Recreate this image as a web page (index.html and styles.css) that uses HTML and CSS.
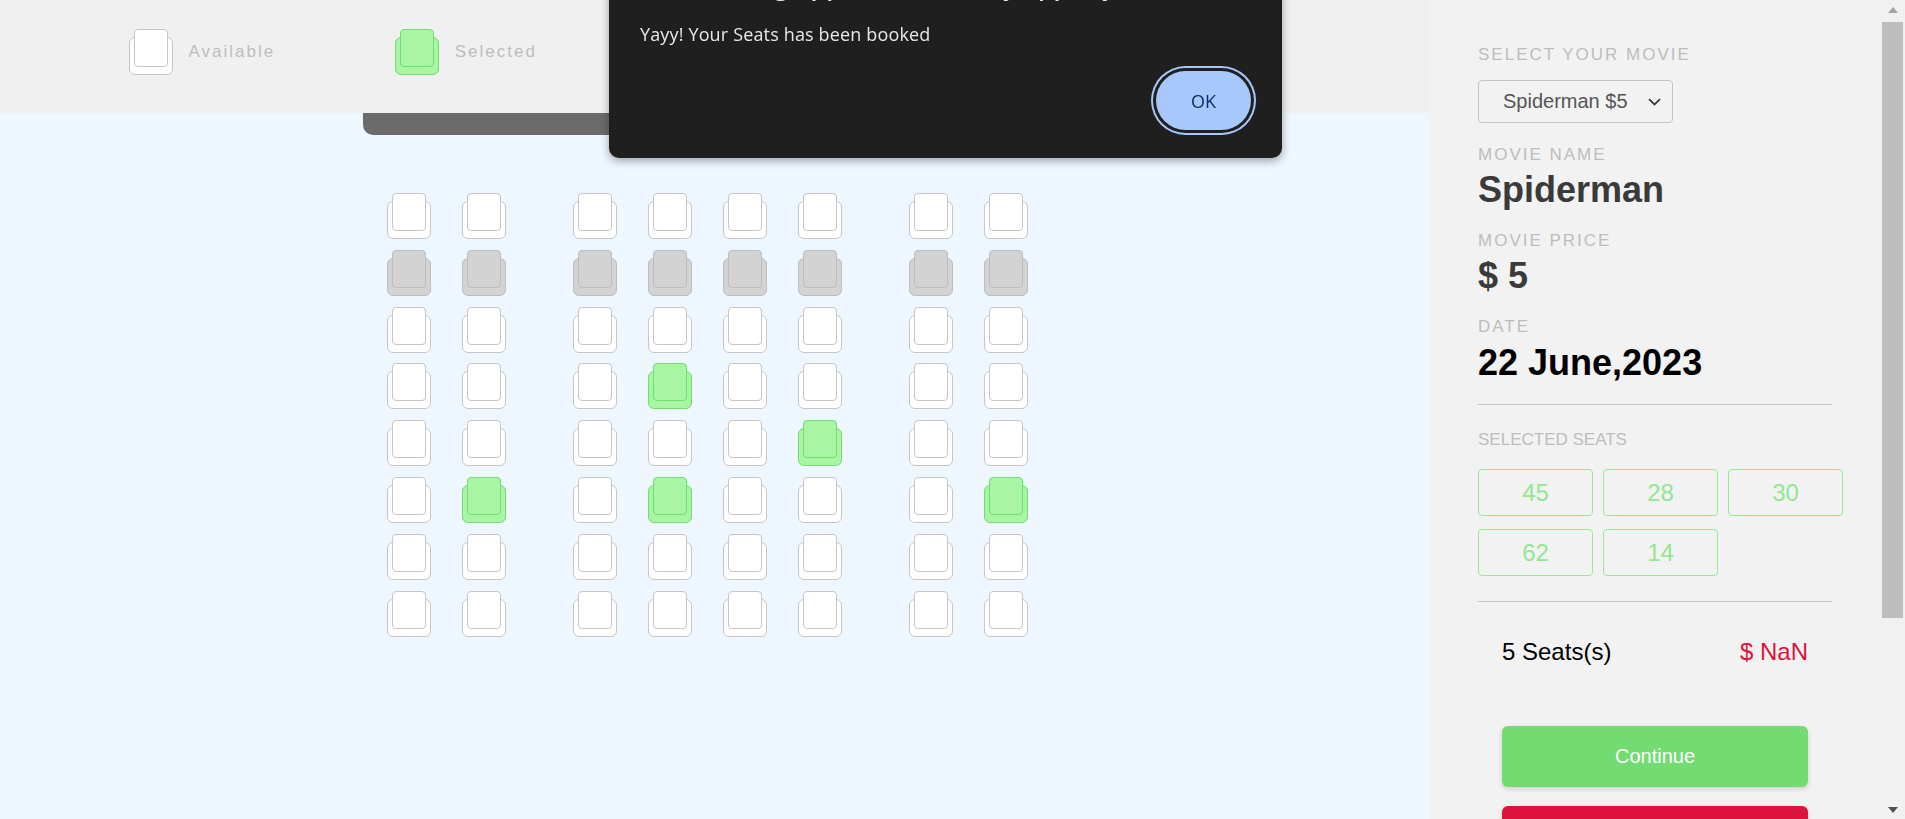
FILE: index.html
```html
<!DOCTYPE html>
<html lang="en">
<head>
<meta charset="utf-8">
<title>Movie Seat Booking</title>
<link rel="stylesheet" href="styles.css">
</head>
<body>
<div class="window">
  <div class="app">
    <main class="hall">
      <header class="legend">
        <div class="legend-item"><span class="seat"></span><span class="legend-text">Available</span></div>
        <div class="legend-item"><span class="seat selected"></span><span class="legend-text">Selected</span></div>
        <div class="legend-item"><span class="seat occupied"></span><span class="legend-text">Occupied</span></div>
      </header>
      <section class="theatre-wrap">
        <div class="theatre">
          <div class="screen"></div>
          <div class="seats">
            <div class="row"><span class="seat"></span><span class="seat"></span><span class="seat"></span><span class="seat"></span><span class="seat"></span><span class="seat"></span><span class="seat"></span><span class="seat"></span></div>
            <div class="row"><span class="seat occupied"></span><span class="seat occupied"></span><span class="seat occupied"></span><span class="seat occupied"></span><span class="seat occupied"></span><span class="seat occupied"></span><span class="seat occupied"></span><span class="seat occupied"></span></div>
            <div class="row"><span class="seat"></span><span class="seat"></span><span class="seat"></span><span class="seat"></span><span class="seat"></span><span class="seat"></span><span class="seat"></span><span class="seat"></span></div>
            <div class="row"><span class="seat"></span><span class="seat"></span><span class="seat"></span><span class="seat selected"></span><span class="seat"></span><span class="seat"></span><span class="seat"></span><span class="seat"></span></div>
            <div class="row"><span class="seat"></span><span class="seat"></span><span class="seat"></span><span class="seat"></span><span class="seat"></span><span class="seat selected"></span><span class="seat"></span><span class="seat"></span></div>
            <div class="row"><span class="seat"></span><span class="seat selected"></span><span class="seat"></span><span class="seat selected"></span><span class="seat"></span><span class="seat"></span><span class="seat"></span><span class="seat selected"></span></div>
            <div class="row"><span class="seat"></span><span class="seat"></span><span class="seat"></span><span class="seat"></span><span class="seat"></span><span class="seat"></span><span class="seat"></span><span class="seat"></span></div>
            <div class="row"><span class="seat"></span><span class="seat"></span><span class="seat"></span><span class="seat"></span><span class="seat"></span><span class="seat"></span><span class="seat"></span><span class="seat"></span></div>
          </div>
        </div>
      </section>
    </main>
    <aside class="sidebar">
      <p class="label first">Select your movie</p>
      <div class="select">
        <span>Spiderman $5</span>
        <svg class="chevron" width="13" height="8" viewBox="0 0 13 8"><path d="M1 1.2 L6.5 6.5 L12 1.2" fill="none" stroke="#3a3a3a" stroke-width="1.8"/></svg>
      </div>
      <p class="label">Movie Name</p>
      <h2 class="value">Spiderman</h2>
      <p class="label">Movie Price</p>
      <h2 class="value">$ 5</h2>
      <p class="label">Date</p>
      <h2 class="value date">22 June,2023</h2>
      <hr class="divider">
      <p class="label plain">Selected Seats</p>
      <div class="chips">
        <span class="chip">45</span><span class="chip">28</span><span class="chip">30</span>
        <span class="chip">62</span><span class="chip">14</span>
      </div>
      <hr class="divider">
      <div class="summary"><span>5 Seats(s)</span><span class="total">$ NaN</span></div>
      <button class="btn continue">Continue</button>
      <button class="btn cancel">Cancel</button>
    </aside>
  </div>
  <div class="scrollbar">
    <span class="sb-arrow up"></span>
    <span class="sb-thumb"></span>
    <span class="sb-arrow down"></span>
  </div>
</div>

<div class="dialog" role="alertdialog">
  <div class="dialog-title">seatbooking-app-adarsh.netlify.app says</div>
  <div class="dialog-msg">Yayy! Your Seats has been booked</div>
  <div class="dialog-actions"><button class="ok">OK</button></div>
</div>
</body>
</html>
```
FILE: styles.css
```css
* { box-sizing: border-box; }
html, body { margin: 0; padding: 0; }
body {
  font-family: "Liberation Sans", Arial, sans-serif;
  overflow: hidden;
  height: 819px;
}
.window {
  display: flex;
  height: 819px;
  overflow: hidden;
}
.app {
  flex: 1;
  display: flex;
  overflow: hidden;
}
/* ---------- left hall ---------- */
.hall {
  width: 1430px;
  flex: none;
  display: flex;
  flex-direction: column;
}
.legend {
  height: 113px;
  flex: none;
  background: #f0f0f0;
  display: flex;
  align-items: flex-start;
  gap: 120px;
  padding: 29px 0 0 129px;
}
.legend-item {
  display: flex;
  align-items: center;
  gap: 15.5px;
}
.legend-text {
  font-size: 17px;
  letter-spacing: 2px;
  color: #bdbdbd;
  padding-top: 1px;
}
.theatre-wrap {
  flex: 1;
  background: #eef6ff;
}
.theatre {
  width: 689px;
  margin-left: 363px;
}
.screen {
  height: 22px;
  background: #6b6b6b;
  border-radius: 0 0 10px 10px;
}
.seats {
  padding: 58px 24px 0;
  display: flex;
  flex-direction: column;
  gap: 12.8px;
}
.row {
  display: flex;
  gap: 31px;
}
.row .seat:nth-child(2),
.row .seat:nth-child(6) {
  margin-right: 36px;
}
.seat {
  display: grid;
  width: 44px;
  height: 44px;
  flex: none;
}
.seat::before,
.seat::after {
  content: "";
  grid-area: 1 / 1;
  border: 1px solid #c6c6c6;
  background: #fff;
}
.seat::before {
  margin-top: 8px;
  height: 36px;
  border-radius: 6px;
}
.seat::after {
  justify-self: center;
  width: 32px;
  height: 36px;
  border-radius: 4px;
}
.seat.occupied::before,
.seat.occupied::after {
  background: #d3d3d3;
  border-color: #bdbdbd;
}
.seat.selected::before,
.seat.selected::after {
  background: #a8f5a4;
  border-color: #74dd70;
}
/* ---------- sidebar ---------- */
.sidebar {
  width: 450px;
  flex: none;
  background: #f2f2f2;
  padding: 45px 48px 0;
  display: flex;
  flex-direction: column;
  align-items: stretch;
}
.sidebar > * { flex: none; }
.label {
  margin: 21px 0 0;
  font-size: 17px;
  line-height: 20px;
  letter-spacing: 2px;
  text-transform: uppercase;
  color: #bdbdbd;
}
.label.first { margin-top: 0; }
.label.plain { letter-spacing: 0; margin-top: 25px; }
.select {
  margin-top: 15px;
  width: 195px;
  height: 43px;
  border: 1px solid #c4c4c4;
  border-radius: 4px;
  display: flex;
  align-items: center;
  padding-left: 24px;
  font-size: 20px;
  color: #555;
}
.select span { flex: 1; }
.chevron { margin-right: 11px; margin-top: 1px; }
.select + .label { margin-top: 22px; }
.value {
  margin: 4px 0 0;
  font-size: 36px;
  line-height: 41px;
  font-weight: 700;
  color: #3a3a3a;
}
.value.date { color: #000; margin-top: 5px; }
.label + .value + .label { margin-top: 21px; }
.divider {
  margin: 21px 0 0;
  border: 0;
  border-top: 1px solid #c6c6c6;
  height: 0;
  width: 354px;
}
.chips {
  margin-top: 19px;
  display: grid;
  grid-template-columns: repeat(3, 115px);
  column-gap: 10px;
  row-gap: 13px;
}
.chip {
  height: 47px;
  border: 1px solid #90ee90;
  border-radius: 4px;
  display: flex;
  align-items: center;
  justify-content: center;
  font-size: 24px;
  color: #90e890;
}
.chips + .divider { margin-top: 25px; }
.summary {
  margin-top: 36px;
  padding: 0 24px;
  display: flex;
  justify-content: space-between;
  font-size: 24px;
  line-height: 28px;
  color: #000;
}
.total { color: #dc143c; }
.btn {
  margin: 60px 24px 0;
  height: 61px;
  border: 0;
  border-radius: 6px;
  font-family: "Liberation Sans", Arial, sans-serif;
  font-size: 20px;
  color: #fff;
  box-shadow: 0 2px 5px rgba(0, 0, 0, 0.15);
}
.continue { background: #72dc72; }
.cancel { background: #dc143c; margin-top: 19px; }
/* ---------- scrollbar ---------- */
.scrollbar {
  width: 25px;
  flex: none;
  background: #f1f1f1;
  display: flex;
  flex-direction: column;
  align-items: center;
}
.sb-arrow {
  width: 0;
  height: 0;
  flex: none;
  border-left: 5.5px solid transparent;
  border-right: 5.5px solid transparent;
}
.sb-arrow.up {
  margin-top: 7px;
  border-bottom: 6px solid #a3a3a3;
}
.sb-thumb {
  flex: none;
  margin-top: 9px;
  width: 21px;
  height: 596px;
  background: #bebebe;
}
.sb-arrow.down {
  margin-top: auto;
  margin-bottom: 6px;
  border-top: 6px solid #505050;
}
/* ---------- alert dialog ---------- */
.dialog {
  position: fixed;
  left: 609px;
  top: -40px;
  width: 673px;
  height: 198px;
  background: #1f1f1f;
  border-radius: 10px;
  box-shadow: 0 3px 8px rgba(0, 0, 0, 0.35);
  padding: 10px 31px 28px 31px;
  display: flex;
  flex-direction: column;
  font-family: "Open Sans", "Noto Sans", sans-serif;
  color: #e8e8e8;
}
.dialog-title {
  font-size: 25px;
  line-height: 30px;
  font-weight: 600;
  white-space: nowrap;
}
.dialog-msg {
  margin-top: 23px;
  font-size: 18px;
  line-height: 22px;
  letter-spacing: 0.15px;
}
.dialog-actions {
  margin-top: auto;
  display: flex;
  justify-content: flex-end;
}
.ok {
  width: 95px;
  height: 59px;
  border: 0;
  border-radius: 30px;
  background: #a8c7fa;
  color: #062e6f;
  font-family: "Open Sans", "Noto Sans", sans-serif;
  font-size: 18px;
  box-shadow: 0 0 0 3px #1f1f1f, 0 0 0 5px #a8c7fa;
}
```
